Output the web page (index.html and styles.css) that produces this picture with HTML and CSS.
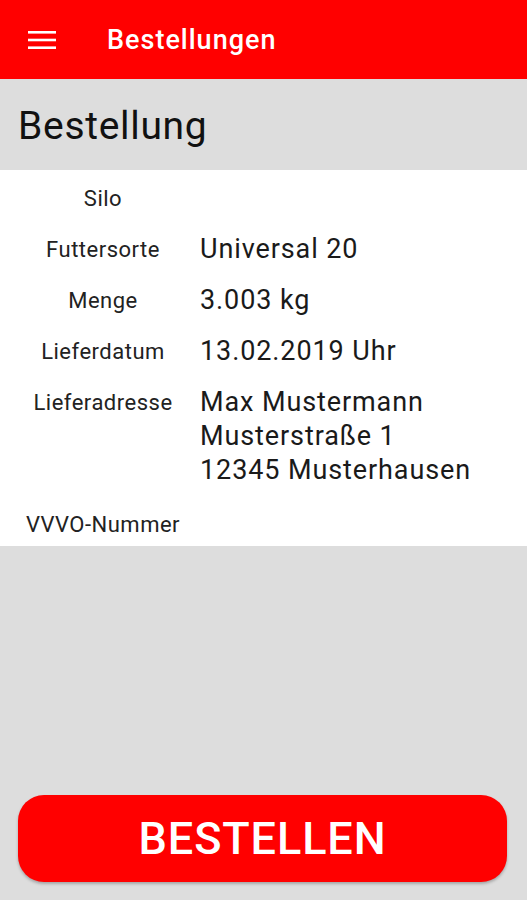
FILE: index.html
```html
<!DOCTYPE html>
<html lang="de">
<head>
<meta charset="utf-8">
<title>Bestellungen</title>
<link rel="stylesheet" href="styles.css">
</head>
<body>
<div class="app">
  <header class="topbar">
    <svg class="menu-icon" width="28" height="18" viewBox="0 0 28 18" aria-hidden="true">
      <rect x="0" y="0" width="28" height="2.6" fill="#fff"/>
      <rect x="0" y="7.7" width="28" height="2.6" fill="#fff"/>
      <rect x="0" y="15.4" width="28" height="2.6" fill="#fff"/>
    </svg>
    <span class="topbar-title">Bestellungen</span>
  </header>
  <section class="section-head">
    <h1 class="section-title">Bestellung</h1>
  </section>
  <section class="details">
    <div class="row"><div class="label">Silo</div><div class="value"></div></div>
    <div class="row"><div class="label">Futtersorte</div><div class="value">Universal 20</div></div>
    <div class="row"><div class="label">Menge</div><div class="value">3.003 kg</div></div>
    <div class="row"><div class="label">Lieferdatum</div><div class="value">13.02.2019 Uhr</div></div>
    <div class="row"><div class="label">Lieferadresse</div><div class="value">Max Mustermann<br>Musterstraße 1<br>12345 Musterhausen</div></div>
    <div class="row row-last"><div class="label">VVVO-Nummer</div><div class="value"></div></div>
  </section>
  <div class="spacer"></div>
  <div class="actions">
    <button class="order-btn" type="button">BESTELLEN</button>
  </div>
</div>
</body>
</html>
```
FILE: styles.css
```css
* { box-sizing: border-box; }
html, body { margin: 0; padding: 0; }
body {
  font-family: Roboto, "Noto Sans", "Liberation Sans", sans-serif;
  background: #dddddd;
  color: #1a1a1a;
}
.app {
  display: flex;
  flex-direction: column;
  height: 900px;
}
.topbar {
  height: 79px;
  background: #ff0000;
  display: flex;
  align-items: center;
  padding-left: 28px;
  flex-shrink: 0;
}
.menu-icon { display: block; margin-top: 1px; }
.topbar-title {
  color: #fff;
  font-size: 27px;
  font-weight: 500;
  letter-spacing: 1px;
  margin-left: 51px;
  margin-top: 1px;
}
.section-head {
  height: 91px;
  background: #dddddd;
  display: flex;
  align-items: center;
  padding-left: 18px;
  flex-shrink: 0;
}
.section-title {
  margin: 0;
  font-size: 39px;
  font-weight: 400;
  letter-spacing: 0.7px;
  color: #111;
  margin-top: 2px;
}
.details {
  background: #fff;
  padding: 2.3px 0 0;
  flex-shrink: 0;
}
.row {
  display: grid;
  grid-template-columns: 190px 1fr;
  align-items: start;
  padding: 8.5px 0;
}
.row-last {
  padding: 11.5px 0 5.5px;
}
.label {
  text-align: center;
  font-size: 22px;
  letter-spacing: 0.5px;
  line-height: 34px;
  color: #222;
  padding-left: 16px;
  padding-top: 1.7px;
  margin-bottom: -1.7px;
}
.value {
  font-size: 27px;
  letter-spacing: 0.9px;
  line-height: 34px;
  min-height: 34px;
  color: #1a1a1a;
  padding-left: 10px;
}
.spacer { flex: 1; }
.actions {
  padding: 0 20px 18px 18px;
  flex-shrink: 0;
}
.order-btn {
  display: block;
  width: 100%;
  height: 87px;
  border: none;
  border-radius: 26px;
  background: #ff0000;
  color: #fff;
  font-family: Roboto, "Noto Sans", "Liberation Sans", sans-serif;
  font-size: 45px;
  font-weight: 500;
  letter-spacing: 0.9px;
  box-shadow: 0 2px 3px rgba(0,0,0,0.25);
  padding: 0;
}
```
